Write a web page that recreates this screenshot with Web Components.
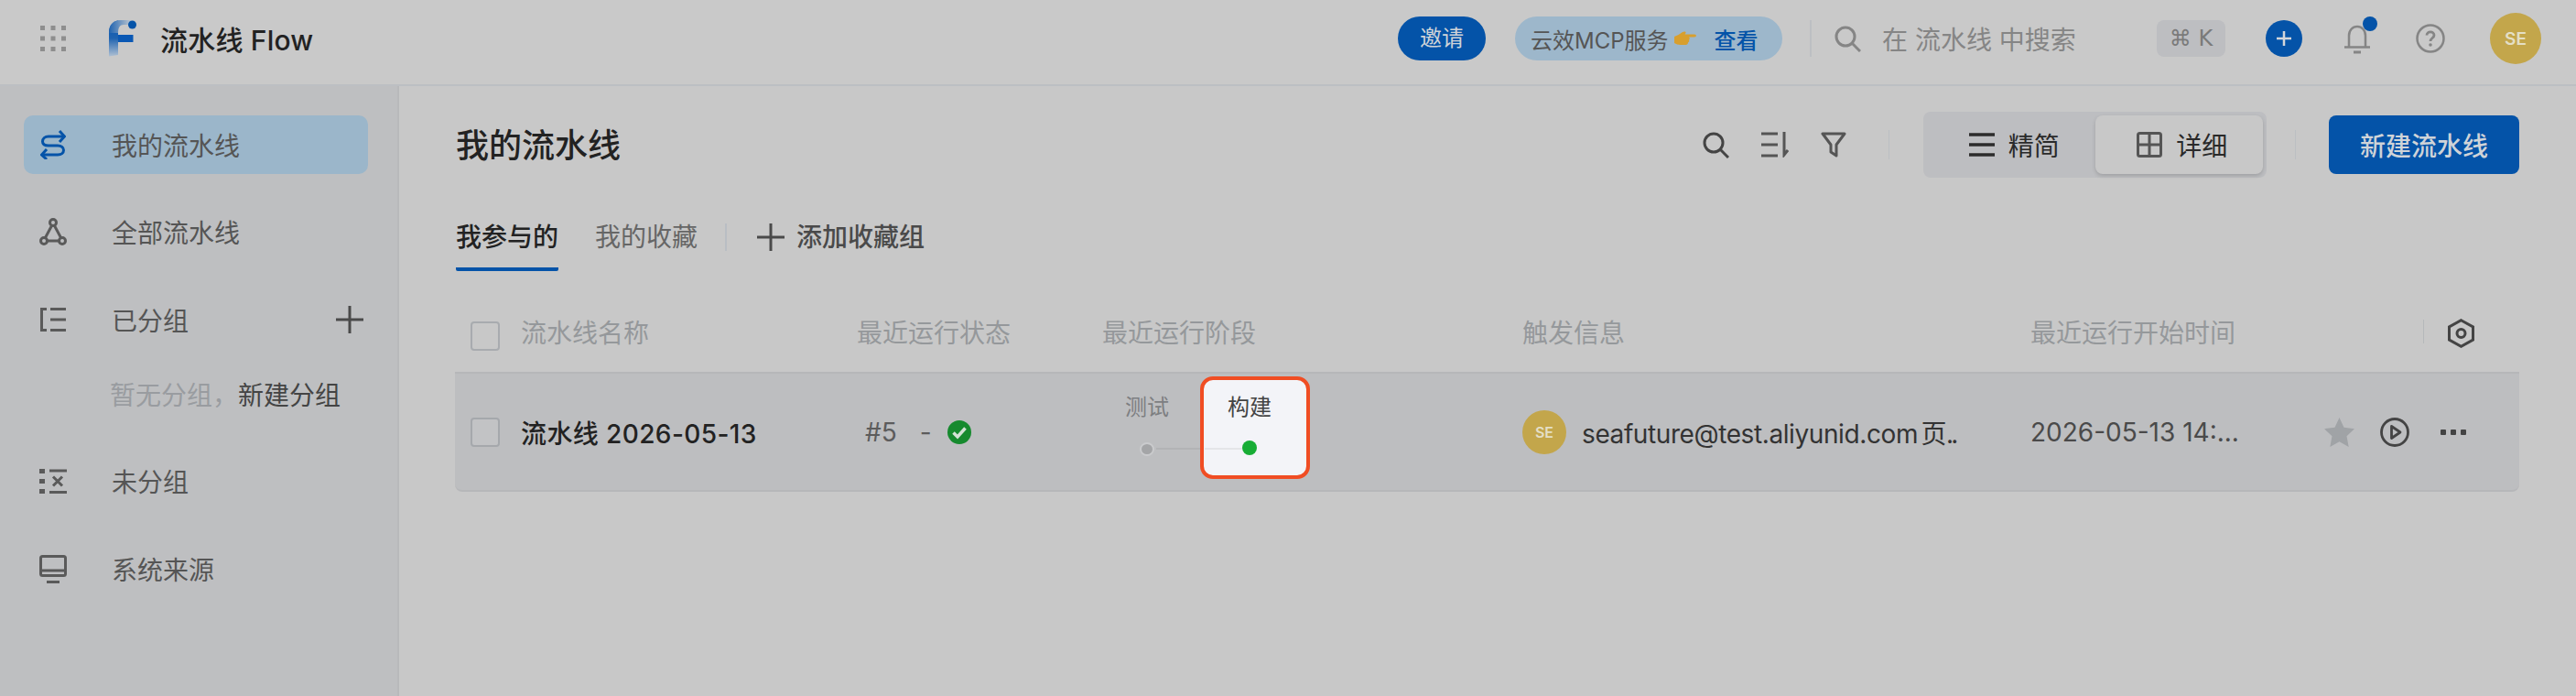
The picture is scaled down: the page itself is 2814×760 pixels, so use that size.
<!DOCTYPE html>
<html lang="zh-CN">
<head>
<meta charset="utf-8">
<title>流水线 Flow</title>
<style>
    html, body { margin: 0; height: 100%; }
    body {
        background: #c8c8c8;
        color: #222;
        font-family: Inter, "Noto Sans CJK SC", sans-serif;
        overflow: hidden;
    }
</style>
</head>
<body>
<flow-app></flow-app>

<script>
const ICONS = {
    grid: `<svg width="28" height="28" viewBox="0 0 28 28" fill="#8e8e8e"><rect x="0" y="0" width="5" height="5"/><rect x="11.5" y="0" width="5" height="5"/><rect x="23" y="0" width="5" height="5"/><rect x="0" y="11.500" width="5" height="5"/><rect x="11.5" y="11.500" width="5" height="5"/><rect x="23" y="11.500" width="5" height="5"/><rect x="0" y="23" width="5" height="5"/><rect x="11.5" y="23" width="5" height="5"/><rect x="23" y="23" width="5" height="5"/></svg>`,
    logo: `<svg width="31" height="40" viewBox="0 0 31 40"><defs><linearGradient id="lg" x1="0" y1="0" x2="0" y2="1"><stop offset="0" stop-color="#0a58b4"/><stop offset=".5" stop-color="#1f63b0"/><stop offset="1" stop-color="#aebfd2"/></linearGradient><linearGradient id="lt" x1="0" y1="0" x2="1" y2="0"><stop offset="0" stop-color="#1f63b0"/><stop offset="1" stop-color="#bcc6d0"/></linearGradient></defs><path d="M0 39.500V14C0 5 5 0 13 0H10V38Z" fill="url(#lg)"/><path d="M0 14C0 5 5 0 13 0H24V5H16C12 5 10 8 10 14Z" fill="url(#lt)"/><path d="M10 16H26.500V24H10Z" fill="#0a58b4"/><circle cx="25.500" cy="5" r="4.500" fill="#0453a8"/></svg>`,
    flow: `<svg width="28" height="32" viewBox="0 0 28 32" fill="none" stroke="#0453a8" stroke-width="3"><path d="M26 7H9C5 7 2.500 9.500 2.500 12.500S5 17 9 17H19C23 17 25.500 19 25.500 22S23 27 19 27H2"/><path d="M21 1L26.500 7L21 13M7 21L1.500 27L7 32"/></svg>`,
    all: `<svg width="30" height="30" viewBox="0 0 30 30" fill="none" stroke="#5a5a5a" stroke-width="3"><circle cx="15" cy="5" r="3.500"/><circle cx="5" cy="25" r="3.500"/><circle cx="25" cy="25" r="3.500"/><path d="M13.500 8.500L6.500 21.500M16.500 8.500L23.500 21.500M8.500 25H21.500"/></svg>`,
    grouped: `<svg width="30" height="26" viewBox="0 0 30 26" fill="none" stroke="#5a5a5a" stroke-width="3"><path d="M8 1.500H2.500V24.500H8M12 1.500H29M12 13H29M12 24.500H29"/></svg>`,
    ungrouped: `<svg width="30" height="27" viewBox="0 0 30 27" fill="none" stroke="#5a5a5a" stroke-width="3"><path d="M11 2H30M11 25.500H30M15 8.500L25 18.500M25 8.500L15 18.500"/><rect x="0" y="0" width="6" height="5" fill="#5a5a5a" stroke="none"/><rect x="0" y="11" width="6" height="5" fill="#5a5a5a" stroke="none"/><rect x="0" y="22" width="6" height="5" fill="#5a5a5a" stroke="none"/></svg>`,
    system: `<svg width="30" height="31" viewBox="0 0 30 31" fill="none" stroke="#5a5a5a" stroke-width="3"><rect x="1.500" y="1.500" width="27" height="21" rx="2"/><path d="M1.500 17H28.500M8 29.500H22"/></svg>`,
    plus: `<svg width="30" height="30" viewBox="0 0 30 30" stroke="#4a4a4a" stroke-width="3"><path d="M0 15H30M15 0V30"/></svg>`,
    search: `<svg width="29" height="29" viewBox="0 0 29 29" fill="none" stroke="currentColor" stroke-width="3"><circle cx="12" cy="12" r="10"/><path d="M19 19L28 28"/></svg>`,
    sort: `<svg width="30" height="28" viewBox="0 0 30 28" fill="none" stroke="#555" stroke-width="3"><path d="M0 2H18M0 14H18M0 26H18"/><path d="M25 0V25L29 20"/></svg>`,
    filter: `<svg width="28" height="28" viewBox="0 0 28 28" fill="none" stroke="#555" stroke-width="3" stroke-linejoin="round"><path d="M2 2H26L17 14V26L11 22V14Z"/></svg>`,
    lines: `<svg width="28" height="26" viewBox="0 0 28 26" stroke="#2c2c2c" stroke-width="3.500"><path d="M0 2H28M0 13H28M0 24H28"/></svg>`,
    table: `<svg width="28" height="28" viewBox="0 0 28 28" fill="none" stroke="#555" stroke-width="3"><rect x="1.500" y="1.500" width="25" height="25" rx="2"/><path d="M14 1.500V26.500M1.500 14H26.500"/></svg>`,
    bell: `<svg width="28" height="33" viewBox="0 0 28 33" fill="none" stroke="#858585" stroke-width="2.500"><path d="M5 25V13C5 7 9 3 14 3S23 7 23 13V25M0 25.500H28"/><path d="M10 31H18" stroke-width="3"/></svg>`,
    help: `<svg width="32" height="32" viewBox="0 0 32 32" fill="none" stroke="#858585" stroke-width="2.500"><circle cx="16" cy="16" r="14.500"/><path d="M12 12.500C12 10 14 8.800 16 8.800S20 10 20 12.500C20 15.500 16 15.500 16 19" stroke-width="2.800"/><circle cx="16" cy="23" r="1.800" fill="#858585" stroke="none"/></svg>`,
    hex: `<svg width="29" height="32" viewBox="0 0 29 32" fill="none" stroke="#444" stroke-width="3"><path d="M14.500 1.700L27.500 9V23L14.500 30.300L1.500 23V9Z"/><circle cx="14.500" cy="16" r="4.500"/></svg>`,
    star: `<svg width="33" height="32" viewBox="0 0 33 32" fill="#a0a3a6"><path d="M16.500 0L21.500 10.800L33 12.200L24.500 20.200L26.700 32L16.500 26.200L6.300 32L8.500 20.200L0 12.200L11.500 10.800Z"/></svg>`,
    play: `<svg width="32" height="32" viewBox="0 0 32 32" fill="none" stroke="#444" stroke-width="2.800"><circle cx="16" cy="16" r="14.500"/><path d="M12.500 9.500L22 16L12.500 22.500Z" stroke-linejoin="round"/></svg>`,
    dots: `<svg width="28" height="6" viewBox="0 0 28 6" fill="#444"><rect x="0" y="0" width="6" height="6" rx="1"/><rect x="11" y="0" width="6" height="6" rx="1"/><rect x="22" y="0" width="6" height="6" rx="1"/></svg>`,
    check: `<svg width="26" height="26" viewBox="0 0 26 26"><circle cx="13" cy="13" r="13" fill="#168a2e"/><path d="M6.500 13.500L11 18L19.500 8.500" fill="none" stroke="#d3e2d5" stroke-width="3.500"/></svg>`,
    hand: `<svg width="24" height="16" viewBox="0 0 24 16"><path d="M0 6C3 5 6 3 9 1C11 0 13 .5 12.500 2L11.500 3.500H22C24.500 3.500 24.500 6.500 22 6.500H16C17 7.500 17 9 16 9.500C16.500 11 16 12 15 12.500C15 14 14 15 12.500 15H7C4 15 2 14 0 13Z" fill="#d89f2e"/></svg>`
};

class FlowAvatar extends HTMLElement {
    constructor() {
        super();
        this.attachShadow({ mode: 'open' });
        const size = Number(this.getAttribute('size') || 56);
        this.shadowRoot.innerHTML = `
            <style>
                :host {
                    display: flex;
                    flex: none;
                    align-items: center;
                    justify-content: center;
                    width: ${size}px;
                    height: ${size}px;
                    border-radius: 50%;
                    background: #c3a64b;
                    color: #e4dfc6;
                    font-size: ${Math.round(size * 0.34)}px;
                    font-weight: 600;
                }
            </style>
            <slot></slot>
        `;
    }
}

class FlowHeader extends HTMLElement {
    constructor() {
        super();
        this.attachShadow({ mode: 'open' });
        this.shadowRoot.innerHTML = `
            <style>
                :host {
                    display: flex;
                    flex: none;
                    align-items: center;
                    box-sizing: border-box;
                    height: 94px;
                    padding: 0 38px 8px 44px;
                    border-bottom: 2px solid #bcbfc3;
                    background: #c9c9c9;
                }
                .logo { display: flex; margin-left: 47px; }
                .product {
                    margin-left: 25px;
                    font-size: 30px;
                    font-weight: 500;
                    letter-spacing: .2px;
                    color: #222;
                }
                .right { display: flex; align-items: center; margin-left: auto; }
                .invite {
                    width: 96px;
                    height: 48px;
                    line-height: 48px;
                    text-align: center;
                    border-radius: 24px;
                    background: #0453a8;
                    color: #cfd3d8;
                    font-size: 24px;
                }
                .mcp {
                    display: flex;
                    align-items: center;
                    box-sizing: border-box;
                    width: 292px;
                    height: 48px;
                    margin-left: 32px;
                    padding-left: 17px;
                    border-radius: 24px;
                    background: #9db7cb;
                    color: #555;
                    font-size: 24px;
                }
                .mcp svg { margin-left: 6px; }
                .mcp b { margin-left: 20px; font-weight: 500; color: #0453a8; }
                .sep { width: 2px; height: 40px; margin: 0 25px 0 30px; background: #bcbfc3; }
                .search {
                    display: flex;
                    align-items: center;
                    width: 427px;
                    color: #858585;
                    font-size: 28px;
                }
                .search span { margin-left: 23px; }
                kbd {
                    margin-left: auto;
                    width: 75px;
                    height: 40px;
                    text-align: center;
                    border-radius: 8px;
                    background: #bdbec1;
                    color: #7a7a7a;
                    font: 24px/40px "DejaVu Sans", sans-serif;
                }
                .add {
                    display: flex;
                    align-items: center;
                    justify-content: center;
                    width: 40px;
                    height: 40px;
                    margin-left: 44px;
                    border-radius: 50%;
                    background: #0453a8;
                }
                .bell { position: relative; display: flex; margin-left: 46px; }
                .bell i {
                    position: absolute;
                    top: -8px;
                    left: 20px;
                    width: 16px;
                    height: 16px;
                    border-radius: 50%;
                    background: #0453a8;
                }
                .help { display: flex; margin: 0 49px 0 50px; }
            </style>
            <span style="display:flex">${ICONS.grid}</span>
            <span class="logo">${ICONS.logo}</span>
            <span class="product">流水线 Flow</span>
            <div class="right">
                <div class="invite">邀请</div>
                <div class="mcp">云效MCP服务${ICONS.hand}<b>查看</b></div>
                <div class="sep"></div>
                <div class="search">
                    ${ICONS.search}
                    <span>在 流水线 中搜索</span>
                    <kbd>⌘ K</kbd>
                </div>
                <div class="add"><svg width="16" height="16" viewBox="0 0 16 16" stroke="#d3d6da" stroke-width="2.500"><path d="M0 8H16M8 0V16"/></svg></div>
                <div class="bell">${ICONS.bell}<i></i></div>
                <div class="help">${ICONS.help}</div>
                <flow-avatar size="56">SE</flow-avatar>
            </div>
        `;
    }
}

class NavItem extends HTMLElement {
    constructor() {
        super();
        this.attachShadow({ mode: 'open' });
        const active = this.hasAttribute('active');
        this.shadowRoot.innerHTML = `
            <style>
                :host {
                    display: flex;
                    align-items: center;
                    box-sizing: border-box;
                    height: 64px;
                    padding: 0 5px 0 17px;
                    border-radius: 10px;
                    font-size: 28px;
                    color: #555;
                    background: ${active ? '#9bb6ca' : 'transparent'};
                }
                .icon { display: flex; justify-content: center; width: 30px; margin-right: 49px; }
                .extra { display: flex; margin-left: auto; }
            </style>
            <span class="icon"><slot name="icon"></slot></span>
            <slot></slot>
            <span class="extra"><slot name="extra"></slot></span>
        `;
    }
}

class FlowSidebar extends HTMLElement {
    constructor() {
        super();
        this.attachShadow({ mode: 'open' });
        this.shadowRoot.innerHTML = `
            <style>
                :host {
                    display: flex;
                    flex: none;
                    flex-direction: column;
                    box-sizing: border-box;
                    width: 436px;
                    padding: 32px 32px 0 26px;
                    border-right: 2px solid #b8b9bb;
                    background: #bebfc1;
                }
                nav-item + nav-item { margin-top: 31px; }
                nav-item.group { margin-top: 32px; }
                nav-item.last { margin-top: 32px; }
                .empty {
                    height: 64px;
                    margin: 19px 0 0;
                    padding-left: 94px;
                    line-height: 64px;
                    font-size: 28px;
                    color: #999ca0;
                    white-space: nowrap;
                }
                .empty b { font-weight: 400; color: #444; }
                span[slot] { display: flex; }
            </style>
            <nav-item active><span slot="icon">${ICONS.flow}</span>我的流水线</nav-item>
            <nav-item><span slot="icon">${ICONS.all}</span>全部流水线</nav-item>
            <nav-item class="group"><span slot="icon">${ICONS.grouped}</span>已分组<span slot="extra">${ICONS.plus}</span></nav-item>
            <div class="empty">暂无分组，<b>新建分组</b></div>
            <nav-item style="margin-top:29px"><span slot="icon">${ICONS.ungrouped}</span>未分组</nav-item>
            <nav-item class="last"><span slot="icon">${ICONS.system}</span>系统来源</nav-item>
        `;
    }
}

class PageToolbar extends HTMLElement {
    constructor() {
        super();
        this.attachShadow({ mode: 'open' });
        this.shadowRoot.innerHTML = `
            <style>
                :host { display: flex; align-items: center; height: 72px; color: #444; }
                h1 { margin: 0 0 5px 1px; font-size: 36px; font-weight: 500; color: #222; }
                .tools { display: flex; align-items: center; gap: 35px; margin-left: auto; }
                .tools span { display: flex; }
                .sep { flex: none; width: 1px; height: 32px; background: #bcbfc3; }
                .seg {
                    display: flex;
                    box-sizing: border-box;
                    width: 375px;
                    height: 72px;
                    margin: 0 31px 0 37px;
                    padding: 4px;
                    border-radius: 8px;
                    background: #bdbec1;
                }
                .seg div {
                    display: flex;
                    align-items: center;
                    justify-content: center;
                    gap: 15px;
                    box-sizing: border-box;
                    width: 184px;
                    padding-left: 7px;
                    border-radius: 8px;
                    font-size: 28px;
                    color: #2a2a2a;
                }
                .seg .on { background: #c8c8c8; box-shadow: 0 2px 4px rgba(0,0,0,.16); }
                button {
                    width: 208px;
                    height: 64px;
                    margin-left: 36px;
                    padding: 0;
                    border: 0;
                    border-radius: 8px;
                    background: #0453a8;
                    color: #cfd3d8;
                    font: 500 28px Inter, "Noto Sans CJK SC", sans-serif;
                }
            </style>
            <h1>我的流水线</h1>
            <div class="tools">
                <span>${ICONS.search}</span>
                <span>${ICONS.sort}</span>
                <span>${ICONS.filter}</span>
            </div>
            <div class="sep" style="margin-left:46px"></div>
            <div class="seg">
                <div>${ICONS.lines}<span>精简</span></div>
                <div class="on">${ICONS.table}<span>详细</span></div>
            </div>
            <div class="sep"></div>
            <button>新建流水线</button>
        `;
    }
}

class PageTabs extends HTMLElement {
    constructor() {
        super();
        this.attachShadow({ mode: 'open' });
        this.shadowRoot.innerHTML = `
            <style>
                :host {
                    display: flex;
                    align-items: flex-start;
                    margin-top: 45px;
                    font-size: 28px;
                    line-height: 40px;
                    color: #666;
                }
                .on {
                    margin-left: 1px;
                    padding-bottom: 13px;
                    border-bottom: 4px solid #0453a8;
                    border-radius: 0 0 2px 2px;
                    font-weight: 500;
                    color: #222;
                }
                .fav { margin-left: 40px; }
                .sep { width: 2px; height: 30px; margin: 5px 33px 0 30px; background: #b9bec4; }
                .add { display: flex; align-items: center; gap: 13px; color: #4a4a4a; font-weight: 500; }
            </style>
            <div class="on">我参与的</div>
            <div class="fav">我的收藏</div>
            <div class="sep"></div>
            <div class="add">${ICONS.plus}<span>添加收藏组</span></div>
        `;
    }
}

const TABLE_COLUMNS = '72px 367px 268px 459px 555px 302px 232px';

class TableHead extends HTMLElement {
    constructor() {
        super();
        this.attachShadow({ mode: 'open' });
        this.shadowRoot.innerHTML = `
            <style>
                :host {
                    display: grid;
                    grid-template-columns: ${TABLE_COLUMNS};
                    align-items: center;
                    height: 74px;
                    margin: 29px 0 7px;
                    font-size: 28px;
                    color: #95989b;
                }
                .box {
                    box-sizing: border-box;
                    width: 32px;
                    height: 32px;
                    margin: 10px 0 0 17px;
                    border: 2px solid #a8abaf;
                    border-radius: 4px;
                }
                .last { display: flex; align-items: center; padding-left: 127px; }
                .last i { width: 1px; height: 26px; margin-right: 26px; background: #b5b8bb; }
                .last svg { margin-top: 4px; }
            </style>
            <div class="box"></div>
            <div>流水线名称</div>
            <div>最近运行状态</div>
            <div>最近运行阶段</div>
            <div>触发信息</div>
            <div>最近运行开始时间</div>
            <div class="last"><i></i>${ICONS.hex}</div>
        `;
    }
}

class StageCell extends HTMLElement {
    constructor() {
        super();
        this.attachShadow({ mode: 'open' });
        const current = this.hasAttribute('current');
        this.shadowRoot.innerHTML = `
            <style>
                :host {
                    position: relative;
                    display: flex;
                    flex-direction: column;
                    align-items: center;
                    width: 98px;
                    height: 70px;
                    isolation: isolate;
                    font-size: 24px;
                    line-height: 34px;
                    color: ${current ? '#444' : '#7d7f82'};
                }
                .focus {
                    position: absolute;
                    z-index: -1;
                    top: -17px;
                    bottom: -25px;
                    left: -5px;
                    right: -17px;
                    border: 4px solid #f04d23;
                    border-radius: 14px;
                    background: #f3f4f8;
                }
                .dot {
                    box-sizing: content-box;
                    width: ${current ? 16 : 12}px;
                    height: ${current ? 16 : 12}px;
                    margin-top: ${current ? 19 : 21}px;
                    border: ${current ? 0 : '2px solid #cacbcd'};
                    border-radius: 50%;
                    background: ${current ? '#17ad35' : '#a4a5a7'};
                }
                .line {
                    position: absolute;
                    z-index: -1;
                    top: 61px;
                    height: 2px;
                    background: ${current ? '#e4e5e8' : '#b2b3b5'};
                    left: ${current ? '0' : '59px'};
                    width: ${current ? '41px' : '49px'};
                }
            </style>
            ${current ? '<div class="focus"></div>' : ''}
            <div class="line"></div>
            <slot></slot>
            <div class="dot"></div>
        `;
    }
}

class PipelineRow extends HTMLElement {
    constructor() {
        super();
        this.attachShadow({ mode: 'open' });
        this.shadowRoot.innerHTML = `
            <style>
                :host {
                    display: grid;
                    grid-template-columns: ${TABLE_COLUMNS};
                    align-items: center;
                    box-sizing: border-box;
                    height: 131px;
                    padding-top: 1px;
                    border-top: 2px solid #b6b7b9;
                    border-bottom: 2px solid #b6b7b9;
                    border-radius: 0 0 8px 8px;
                    background: #bdbec0;
                    font-size: 28px;
                }
                .box {
                    box-sizing: border-box;
                    width: 32px;
                    height: 32px;
                    margin-left: 17px;
                    border: 2px solid #a5a8ac;
                    border-radius: 4px;
                    background: #c2c3c5;
                }
                .name { font-weight: 500; letter-spacing: .4px; color: #222; }
                .status { display: flex; align-items: center; padding-left: 9px; color: #5c5c5c; }
                .status b { margin: 0 17px 0 25px; font-weight: 400; }
                .stages { display: flex; gap: 14px; margin-bottom: 18px; }
                .trigger { display: flex; align-items: center; gap: 17px; color: #333; white-space: nowrap; }
                .trigger span { letter-spacing: -.4px; word-spacing: -4px; }
                .trigger i { font-style: normal; letter-spacing: -3px; }
                .time { color: #4a4a4a; white-space: nowrap; }
                .actions { display: flex; align-items: center; padding-left: 19px; }
                .actions span { display: flex; }
            </style>
            <div class="box"></div>
            <div class="name">流水线 2026-05-13</div>
            <div class="status">#5<b>-</b>${ICONS.check}</div>
            <div class="stages">
                <stage-cell>测试</stage-cell>
                <stage-cell current>构建</stage-cell>
            </div>
            <div class="trigger"><flow-avatar size="48">SE</flow-avatar><span>seafuture@test.aliyunid.com 页<i>..</i></span></div>
            <div class="time">2026-05-13 14:...</div>
            <div class="actions">
                <span>${ICONS.star}</span>
                <span style="margin-left:28px">${ICONS.play}</span>
                <span style="margin-left:34px">${ICONS.dots}</span>
            </div>
        `;
    }
}

class FlowApp extends HTMLElement {
    constructor() {
        super();
        this.attachShadow({ mode: 'open' });
        this.shadowRoot.innerHTML = `
            <style>
                :host { display: flex; flex-direction: column; height: 760px; }
                .body { display: flex; flex: 1; }
                main { flex: 1; box-sizing: border-box; padding: 28px 62px 0 61px; background: #c8c8c8; }
            </style>
            <flow-header></flow-header>
            <div class="body">
                <flow-sidebar></flow-sidebar>
                <main>
                    <page-toolbar></page-toolbar>
                    <page-tabs></page-tabs>
                    <table-head></table-head>
                    <pipeline-row></pipeline-row>
                </main>
            </div>
        `;
    }
}

customElements.define('flow-avatar', FlowAvatar);
customElements.define('flow-header', FlowHeader);
customElements.define('nav-item', NavItem);
customElements.define('flow-sidebar', FlowSidebar);
customElements.define('page-toolbar', PageToolbar);
customElements.define('page-tabs', PageTabs);
customElements.define('table-head', TableHead);
customElements.define('stage-cell', StageCell);
customElements.define('pipeline-row', PipelineRow);
customElements.define('flow-app', FlowApp);
</script>
</body>
</html>
